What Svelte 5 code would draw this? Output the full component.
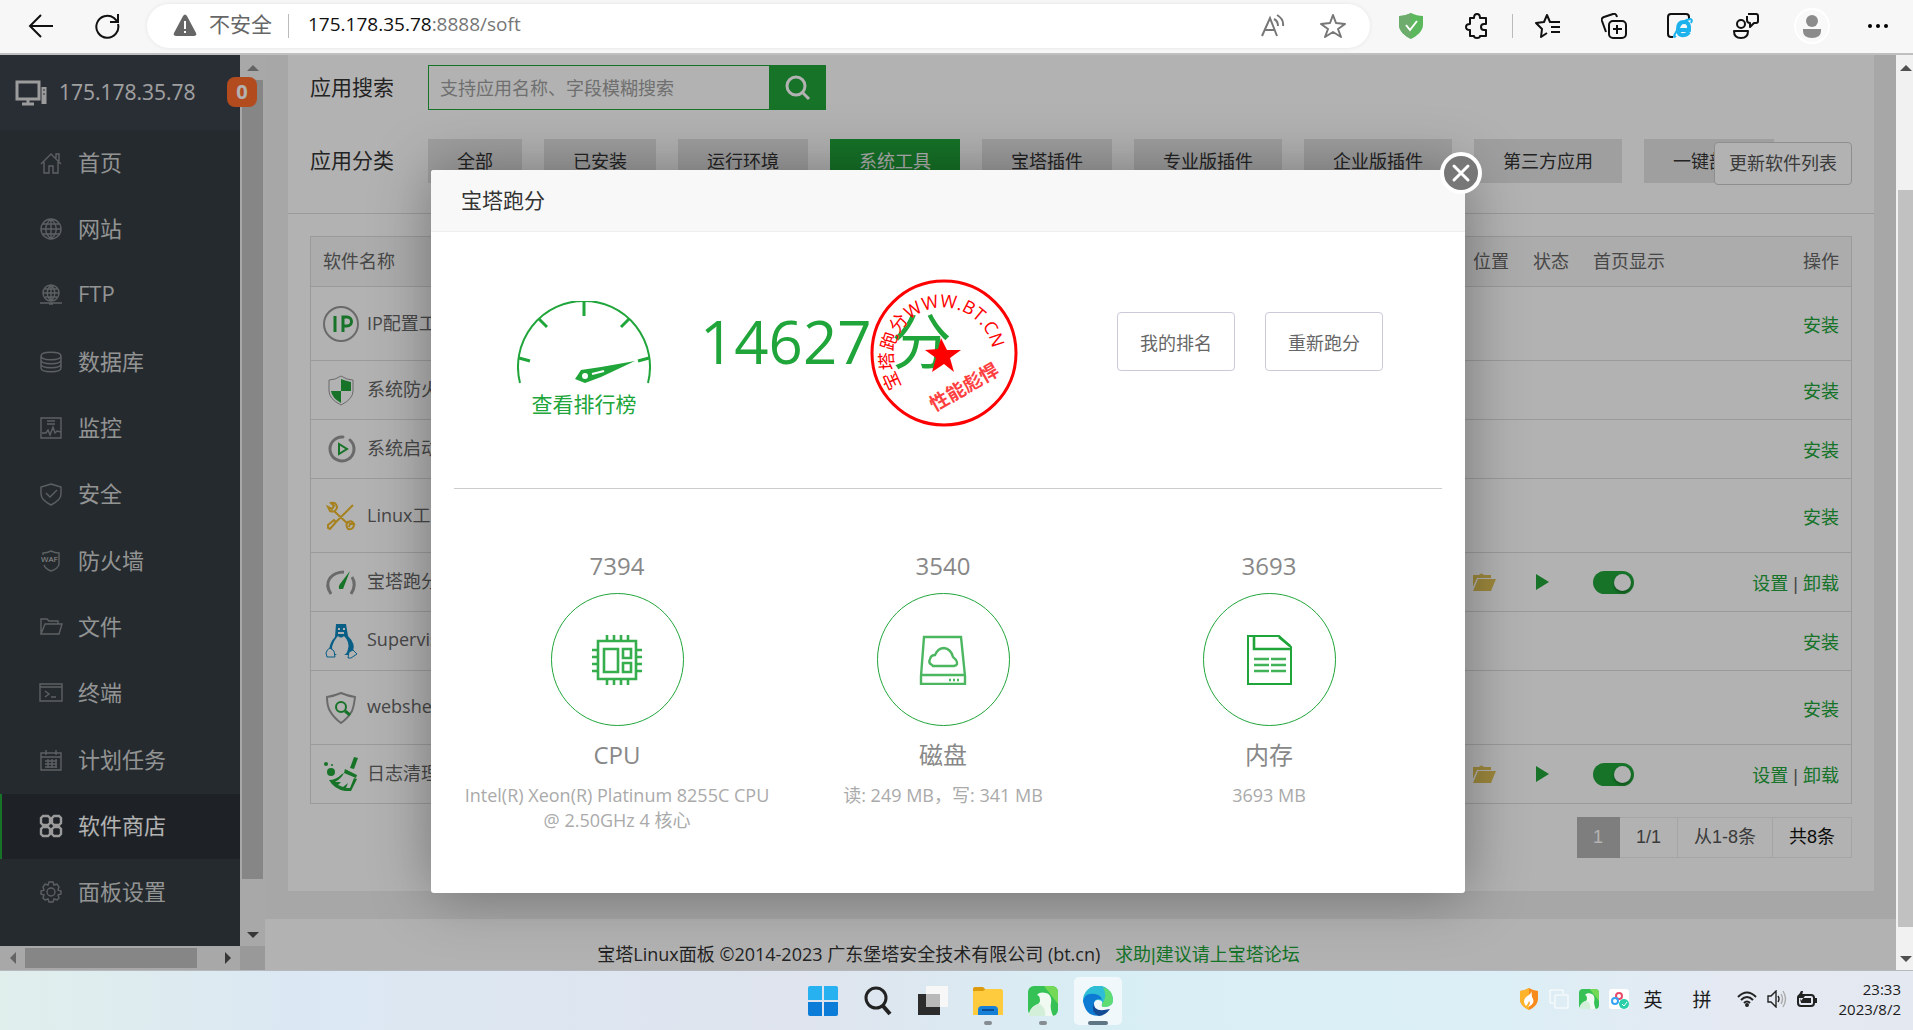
<script lang="ts">
	let keyword = $state('');
	let currentType = $state('系统工具');
	let currentMenu = $state('软件商店');
	let showScore = $state(true);

	const menus = [
		{ name: '首页', d: 'M1 12 11 2l10 10M4 10v11h5v-7h4v7h5V10M16 6V2h3v7' },
		{ name: '网站', d: 'M11 1a10 10 0 1 0 0 20 10 10 0 0 0 0-20zM11 1v20M1 11h20M3 6h16M3 16h16M11 1c-7 6-7 14 0 20M11 1c7 6 7 14 0 20' },
		{ name: 'FTP', d: 'M11 1a8 8 0 1 0 0 16 8 8 0 0 0 0-16zM11 1v16M3 9h16M5 5h12M5 13h12M11 1c-5 5-5 11 0 16M11 1c5 5 5 11 0 16M0 19h22M9 20h4' },
		{ name: '数据库', d: 'M1 5c0-5 20-5 20 0s-20 5-20 0v12c0 5 20 5 20 0V5M1 9c0 5 20 5 20 0M1 13c0 5 20 5 20 0' },
		{ name: '监控', d: 'M1 1h20v20H1zM7 4h8M7 7h8M2 16h4l2-3 2 5 3-8 2 6 2-2 4 1' },
		{ name: '安全', d: 'M11 1 21 4v7c0 5-4 8-10 11C5 19 1 16 1 11V4zM6 10l4 4 7-7' },
		{ name: '防火墙', d: 'M3 5V3c3 0 6-1 8-2 2 1 5 2 8 2v11c0 3-4 6-8 7-3-1-6-3-7-6' },
		{ name: '文件', d: 'M1 18V3h6l2 2h9v3M1 18 5 8h17l-3 10z' },
		{ name: '终端', d: 'M0 2h22v17H0zM0 5h22M5 9l4 3-4 3M11 15h5' },
		{ name: '计划任务', d: 'M1 4h20v17H1zM1 8h20M6 1v5M16 1v5M5 12h12M5 15h12M5 18h12M8 10v9M12 10v9M16 10v9' },
		{ name: '软件商店', d: 'M3 1h5l2 2v5l-2 2H3L1 8V3zM14 1h5l2 2v5l-2 2h-5l-2-2V3zM3 12h5l2 2v5l-2 2H3l-2-2v-5zM14 12h5l2 2v5l-2 2h-5l-2-2v-5z' },
		{ name: '面板设置', d: 'M9 1h4l1 3 3-1 2 3-1 3 3 1v3l-3 1 1 3-2 2-3-1-1 3H9l-1-3-3 1-2-2 1-3-3-1v-3l3-1-1-3 2-3 3 1zM11 7a4 4 0 1 0 0 8 4 4 0 0 0 0-8z' }
	];

	const types = ['全部', '已安装', '运行环境', '系统工具', '宝塔插件', '专业版插件', '企业版插件', '第三方应用', '一键部署'];

	let softs = $state([
		{ name: 'IP配置工具', icon: 'ip', tall: true, installed: false, index: false },
		{ name: '系统防火墙', icon: 'firewall', tall: false, installed: false, index: false },
		{ name: '系统启动项', icon: 'boot', tall: false, installed: false, index: false },
		{ name: 'Linux工具箱', icon: 'tools', tall: true, installed: false, index: false },
		{ name: '宝塔跑分', icon: 'score', tall: false, installed: true, index: true },
		{ name: 'Supervisor', icon: 'linux', tall: false, installed: false, index: false },
		{ name: 'webshell', icon: 'webshell', tall: true, installed: false, index: false },
		{ name: '日志清理', icon: 'broom', tall: false, installed: true, index: true }
	]);

	const scores = [
		{ key: 'cpu', value: 7394, label: 'CPU', desc: 'Intel(R) Xeon(R) Platinum 8255C CPU @ 2.50GHz 4 核心' },
		{ key: 'disk', value: 3540, label: '磁盘', desc: '读: 249 MB，写: 341 MB' },
		{ key: 'mem', value: 3693, label: '内存', desc: '3693 MB' }
	];
</script>

{#snippet bird(size: number)}
	<svg width={size} height={size} viewBox="0 0 30 30">
		<rect width="30" height="30" rx="6" fill="#35c156" />
		<path d="M16 0h8a6 6 0 0 1 6 6v12z" fill="#74d957" />
		<path d="M9 9c2-3 6-3 9-2 4 1 6 5 5 10-1 4 0 8 2 13H1c0-6 4-10 9-12 3-2 2-5 1-8z" fill="#f1faf2" />
		<path d="M1 30c0-7 5-12 11-12 4 3 6 7 5 12z" fill="#d3efd9" />
	</svg>
{/snippet}

<div class="desktop">
	<header class="browser">
		<button class="tool" aria-label="后退">
			<svg width="26" height="26" viewBox="0 0 26 26" fill="none" stroke="#111" stroke-width="2"><path d="M25 13H2M13 2 2 13l11 11" /></svg>
		</button>
		<button class="tool" aria-label="刷新">
			<svg width="26" height="26" viewBox="0 0 26 26" fill="none" stroke="#111" stroke-width="2"><path d="M24 11a11 11 0 1 1-4-6l3 3M24 1v8h-8" /></svg>
		</button>
		<div class="address">
			<svg width="24" height="23" viewBox="0 0 24 23"><path d="M10 2q2-3 4 0l9 17q1 3-2 3H3q-3 0-2-3z" fill="#666" /><path d="M12 7v8M12 17v2" stroke="#fff" stroke-width="2" /></svg>
			<span class="unsafe">不安全</span>
			<span class="divider"></span>
			<span class="url">175.178.35.78<span>:8888/soft</span></span>
			<button class="inner-tool" aria-label="朗读">
				<svg width="24" height="24" viewBox="0 0 24 24" fill="none" stroke="#777" stroke-width="2"><path d="M1 22 9 4l7 18M4 16h10M13 5q4 2 4 7M16 1q7 4 6 11" /></svg>
			</button>
			<button class="inner-tool" aria-label="收藏">
				<svg width="26" height="26" viewBox="0 0 26 26" fill="none" stroke="#777" stroke-width="2" stroke-linejoin="round"><path d="m13 2 3 8 9 1-7 5 3 8-8-5-8 5 3-8-7-5 9-1z" /></svg>
			</button>
		</div>
		<button class="tool" aria-label="安全防护">
			<svg width="24" height="26" viewBox="0 0 24 26"><path d="M12 0c4 2 8 3 12 3v9c0 6-6 11-12 14C6 23 0 18 0 12V3c4 0 8-1 12-3z" fill="#5cb85c" /><path d="M12 0C8 2 4 3 0 3v9c0 6 6 11 12 14z" fill="#6dac6d" /><path d="m7 12 4 5 7-9" fill="none" stroke="#fff" stroke-width="2" /></svg>
		</button>
		<button class="tool" aria-label="扩展">
			<svg width="24" height="26" viewBox="0 0 24 26" fill="none" stroke="#111" stroke-width="2" stroke-linejoin="round"><path d="M5 5h4q0-4 3-4t3 4h6v6h-2q-3 0-3 3t3 3h2v6h-6q0 2-3 2t-3-2H5v-6q-4 0-4-3t4-3z" /></svg>
		</button>
		<span class="divider"></span>
		<button class="tool" aria-label="收藏夹">
			<svg width="26" height="26" viewBox="0 0 26 26" fill="none" stroke="#111" stroke-width="2" stroke-linejoin="round"><path d="M17 9h-2l-3-7-3 7-8 1 6 6-1 8 6-4M17 9h8M16 14h9M16 19h9" /></svg>
		</button>
		<button class="tool" aria-label="集锦">
			<svg width="26" height="26" viewBox="0 0 26 26" fill="none" stroke="#111" stroke-width="2"><path d="M5 19 1 8q-1-3 2-4l9-3q3-1 4 3" /><rect x="8" y="8" width="17" height="17" rx="4" /><path d="M16 12v9M12 16h9" /></svg>
		</button>
		<button class="tool" aria-label="IE 模式">
			<svg width="26" height="26" viewBox="0 0 26 26" fill="none"><path d="M6 24H4q-3 0-3-3V4q0-3 3-3h15q3 0 3 3v2" stroke="#111" stroke-width="2" /><path d="M11 17h11q1-8-5-8t-6 7 6 6q3 0 5-3" stroke="#1eb2ec" stroke-width="4" /><path d="M9 23q-4 3 0-4Q15 7 23 6q3 0 1 4" stroke="#1eb2ec" stroke-width="2" /></svg>
		</button>
		<button class="tool" aria-label="分享">
			<svg width="26" height="26" viewBox="0 0 26 26" fill="none" stroke="#111" stroke-width="2" stroke-linejoin="round"><circle cx="8" cy="11" r="4" /><path d="M1 18h14q0 7-7 7t-7-7zM15 1h8q2 0 2 2v5q0 2-2 2h-2l-4 4v-4q-3 0-3-3V3" /></svg>
		</button>
		<button class="tool" aria-label="个人">
			<svg width="36" height="36" viewBox="0 0 36 36"><circle cx="18" cy="18" r="17" fill="#f9f9f9" stroke="#fff" stroke-width="2" /><circle cx="18" cy="13" r="6" fill="#8b8b8b" /><path d="M9 21h18v2q0 7-9 7t-9-7z" fill="#8b8b8b" /></svg>
		</button>
		<button class="tool" aria-label="更多">
			<svg width="20" height="4" viewBox="0 0 20 4"><circle cx="2" cy="2" r="2" /><circle cx="10" cy="2" r="2" /><circle cx="18" cy="2" r="2" /></svg>
		</button>
	</header>

	<div class="window">
		<div class="page">
			<aside class="sidebar">
				<div class="sidebar-body">
					<div class="server">
						<svg width="32" height="26" viewBox="0 0 32 26" fill="none" stroke="#e0e0e0" stroke-width="3"><path d="M2 2h22v17H2z" /><path d="M13 19v4M7 24h12" /><path d="M29 7v17" stroke-width="5" /><path d="M29 9v2M29 13v2" stroke="#3c424d" stroke-width="1" /></svg>
						<span>175.178.35.78</span>
						<b class="badge">0</b>
					</div>
					<nav>
						{#each menus as menu}
							<a href="#{menu.name}" class:active={menu.name === currentMenu} onclick={() => (currentMenu = menu.name)}>
								<svg width="24" height="24" viewBox="-1 -1 24 24" fill="none" stroke="currentColor" stroke-width={menu.name === '软件商店' ? 2.4 : 1.4}>
									<path d={menu.d} />
									{#if menu.name === '防火墙'}
										<text x="1" y="12" font-size="8" fill="#d2d4d5" stroke="none">WAF</text>
									{/if}
								</svg>
								<span>{menu.name}</span>
							</a>
						{/each}
					</nav>
				</div>
				<div class="vbar">
					<i class="arrow up faint"></i>
					<div class="vthumb"></div>
					<i class="arrow down"></i>
				</div>
				<div class="hbar">
					<i class="arrow left faint"></i>
					<div class="hthumb"></div>
					<i class="arrow right"></i>
				</div>
				<div class="corner"></div>
			</aside>

			<main>
				<section class="panel">
					<div class="filters">
						<div class="filter-row">
							<label for="keyword">应用搜索</label>
							<div class="search">
								<input id="keyword" type="text" placeholder="支持应用名称、字段模糊搜索" bind:value={keyword} />
								<button aria-label="搜索">
									<svg width="26" height="26" viewBox="0 0 26 26" fill="none" stroke="#fff" stroke-width="3"><circle cx="11" cy="11" r="9" /><path d="m17 17 7 7" /></svg>
								</button>
							</div>
						</div>
						<div class="filter-row types">
							<span class="row-label">应用分类</span>
							<div class="type-list">
								{#each types as type}
									<button class:on={type === currentType} onclick={() => (currentType = type)}>{type}</button>
								{/each}
							</div>
							<button class="update">更新软件列表</button>
						</div>
					</div>

					<div class="list">
						<table>
							<thead>
								<tr>
									<th>软件名称</th>
									<th class="narrow">位置</th>
									<th class="narrow">状态</th>
									<th class="index">首页显示</th>
									<th class="ops">操作</th>
								</tr>
							</thead>
							<tbody>
								{#each softs as soft}
									<tr class:tall={soft.tall}>
										<td>
											<div class="soft">
												<svg width="36" height="36" viewBox="0 0 36 36" fill="none">
													{#if soft.icon === 'ip'}
														<circle cx="18" cy="18" r="17" stroke="#999" stroke-width="2" />
														<path d="M12 10v16M20 26V11h4a4 4 0 0 1 0 9h-4" stroke="#20a53a" stroke-width="3" />
													{:else if soft.icon === 'firewall'}
														<path d="M18 4q6 4 12 4v11q0 8-12 14Q6 27 6 19V8q6 0 12-4z" fill="#fff" stroke="#999" />
														<path d="M18 7q5 2 10 3v9H18zM18 19v12Q9 26 8 19z" fill="#20a53a" />
													{:else if soft.icon === 'boot'}
														<path d="M20 6a12 12 0 1 0 7 3" stroke="#999" stroke-width="3" stroke-linecap="round" />
														<path d="M16 13v10l8-5z" stroke="#20a53a" stroke-width="2" />
													{:else if soft.icon === 'tools'}
														<path d="M11 13 25 26M30 7 13 24M8 5q5-1 6 4-1 6-7 4L5 9l4 2 2-3zM31 26q0 6-6 5-3-4 0-7 4-2 6 2l-4 0-1 3M13 24l-6 7-2-1 0-3 6-5z" stroke="#efb92b" stroke-width="2" />
													{:else if soft.icon === 'score'}
														<path d="M8 30Q2 21 7 14q5-6 14-6M29 13q5 8-1 17" stroke="#999" stroke-width="3" />
														<path d="M27 7 20 25l-4 0q-1-3 1-5z" fill="#20a53a" />
													{:else if soft.icon === 'linux'}
														<path d="M13 1h10l2 12q8 8 5 15l-4 4H11l-5-5q1-8 6-13z" fill="#0d87bf" />
														<path d="M15 13q3 3 6 0 6 6 4 13-1 5-4 6h-7q-5-3-5-8 2-7 6-11z" fill="#fff" />
														<path d="M7 25q-3 1-4 5l1 4h8l-1-6zM30 27l4 4-6 4h-3l1-6z" fill="#fff" stroke="#0d87bf" />
														<path d="M15 6h2M20 6h2M15 10h6" stroke="#fff" stroke-width="2" />
													{:else if soft.icon === 'webshell'}
														<path d="M18 3q7 3 14 4-1 9-3 14-4 7-11 12Q11 28 7 21 4 16 4 7q7-1 14-4z" stroke="#999" stroke-width="2" />
														<circle cx="18" cy="17" r="5" stroke="#20a53a" stroke-width="2" />
														<path d="m22 21 5 4" stroke="#20a53a" stroke-width="3" />
													{:else}
														<path d="m31 1 4 1-4 11-4-1zM22 13l12 6-1 3-12-5zM19 18q-6 6-13 6 5 9 16 11h6l6-12-3-1-4 10-4 0 2-5-5 4-5-2 3-3-6 0q6-3 9-9z" fill="#20a53a" />
														<circle cx="8" cy="16" r="4" fill="#20a53a" /><circle cx="3" cy="8" r="2" fill="#20a53a" /><circle cx="9" cy="9" r="1" fill="#20a53a" />
													{/if}
												</svg>
												<span>{soft.name}</span>
											</div>
										</td>
										<td>
											{#if soft.installed}
												<svg width="24" height="18" viewBox="0 0 24 18" fill="#e0c257"><path d="M0 14V2h6q2-3 5 0h7v3H4zM5 6h18l-5 12H0z" /></svg>
											{/if}
										</td>
										<td>
											{#if soft.installed}
												<svg class="play" width="13" height="16" viewBox="0 0 13 16" fill="#20a53a"><path d="M0 0v16l13-8z" /></svg>
											{/if}
										</td>
										<td>
											{#if soft.installed}
												<input class="switch" type="checkbox" aria-label="首页显示" bind:checked={soft.index} />
											{/if}
										</td>
										<td class="ops">
											{#if soft.installed}
												<a href="#set">设置</a> | <a href="#remove">卸载</a>
											{:else}
												<a href="#install">安装</a>
											{/if}
										</td>
									</tr>
								{/each}
							</tbody>
						</table>
						<div class="pager">
							<span class="current">1</span>
							<span>1/1</span>
							<span>从1-8条</span>
							<span class="total">共8条</span>
						</div>
					</div>
				</section>
				<footer>
					宝塔Linux面板 ©2014-2023 广东堡塔安全技术有限公司 (bt.cn)
					<a href="#bbs">求助|建议请上宝塔论坛</a>
				</footer>
			</main>

			{#if showScore}
				<div class="mask">
					<div class="modal" role="dialog" aria-label="宝塔跑分">
						<div class="modal-title">宝塔跑分</div>
						<button class="close" aria-label="关闭" onclick={() => (showScore = false)}>
							<svg width="43" height="43" viewBox="0 0 43 43"><circle cx="21" cy="21" r="19" fill="#777" stroke="#fff" stroke-width="4" /><path d="m14 14 14 14M28 14 14 28" stroke="#fff" stroke-width="3" stroke-linecap="round" /></svg>
						</button>
						<div class="modal-body">
							<div class="summary">
								<a class="gauge" href="#rank">
									<svg width="134" height="83" viewBox="0 0 134 83" fill="none" stroke="#20a53a" stroke-width="2">
										<path d="M3 82a66 66 0 1 1 128 0" />
										<path d="M67 1v14M22 18l8 8M112 18l-8 8M2 57l11 3M132 57l-11 3" stroke-width="3" />
										<path d="M118 60 84 76l-16 6-10-4 6-9 20-3z" fill="#20a53a" stroke="none" />
										<circle cx="68" cy="75" r="3" fill="#fff" stroke="none" />
										<path d="m75 73 12-3" stroke="#fff" />
									</svg>
									<span>查看排行榜</span>
								</a>
								<div class="total-score">
									<span>14627</span>
									<span>分</span>
									<svg class="stamp" width="148" height="148" viewBox="0 0 148 148">
										<circle cx="74" cy="74" r="72" fill="none" stroke="#f00" stroke-width="3" />
										<path id="stamp-arc" d="M32 107A50 50 0 1 1 123 82" fill="none" />
										<text font-size="18" fill="#f00"><textPath href="#stamp-arc">宝塔跑分WWW.BT.CN</textPath></text>
										<path d="m71 59 6 12 14 0-11 8 4 14-10-8-12 8 4-14-11-8 13-1z" fill="#f00" />
										<text x="94" y="115" font-size="19" font-weight="700" fill="#f00" text-anchor="middle" transform="rotate(-30 94 108)" opacity=".75">性能彪悍</text>
									</svg>
								</div>
								<div class="actions">
									<button>我的排名</button>
									<button>重新跑分</button>
								</div>
							</div>
							<div class="scores">
								{#each scores as score}
									<div class="score">
										<div class="value">{score.value}</div>
										<div class="circle">
											<svg width="50" height="50" viewBox="0 0 50 50" fill="none" stroke="#20a53a" stroke-width="2">
												{#if score.key === 'cpu'}
													<path d="M6 6h38v38H6zM12 14h14v23H12zM31 14h8v9h-8zM31 28h8v9h-8z" stroke-width="2.6" opacity=".9" />
													<path d="M15 0v5M22 0v5M29 0v5M36 0v5M15 45v5M22 45v5M29 45v5M36 45v5M0 15h5M0 22h5M0 29h5M0 36h5M45 15h5M45 22h5M45 29h5M45 36h5" stroke-width="2.6" opacity=".9" />
												{:else if score.key === 'disk'}
													<g opacity=".8" stroke-width="2.4">
														<path d="M6 2h37l4 39v8H3v-8zM3 40h44" />
														<path d="M14 30q-4-2-2-6 1-4 5-4 3-7 9-7 7 1 9 9l3 3q3 5-2 6H15z" />
														<path d="M31 45h2M35 45h2M39 45h2" />
													</g>
												{:else}
													<path d="M4 1h31l12 11v37H4z" />
													<path d="M10 1v13h37M35 2l11 9" stroke-width="2.6" />
													<path d="M10 24h15M27 24h15M10 30h15M27 30h15M10 36h15M27 36h15" stroke-width="2.6" opacity=".85" />
												{/if}
											</svg>
										</div>
										<div class="label">{score.label}</div>
										<div class="desc">{score.desc}</div>
									</div>
								{/each}
							</div>
						</div>
					</div>
				</div>
			{/if}
		</div>
		<div class="page-scroll">
			<i class="arrow up"></i>
			<div class="page-thumb"></div>
			<i class="arrow down"></i>
		</div>
	</div>

	<div class="taskbar">
		<div></div>
		<div class="apps">
			<button aria-label="开始">
				<svg width="30" height="30" viewBox="0 0 30 30"><path d="M0 2q0-2 2-2h12v14H0zM16 0h12q2 0 2 2v12H16z" fill="#27b1f0" /><path d="M0 16h14v14H2q-2 0-2-2zM16 16h14v12q0 2-2 2H16z" fill="#0b7dd8" /></svg>
			</button>
			<button aria-label="搜索">
				<svg width="28" height="30" viewBox="0 0 28 30" fill="none" stroke="#222" stroke-width="3"><circle cx="12" cy="12" r="10" /><path d="m19 20 7 8" stroke-width="4" /></svg>
			</button>
			<button aria-label="任务视图">
				<svg width="30" height="30" viewBox="0 0 30 30"><path d="M0 8h22v21H0z" fill="#2c2c2c" /><path d="M8 0h22v21H8z" fill="#f7f7f7" /><path d="M8 8h14v13H8z" fill="#b9b9b9" /></svg>
			</button>
			<button class="running" aria-label="资源管理器">
				<svg width="30" height="30" viewBox="0 0 30 30"><path d="M0 3q0-2 2-2h8l3 3v4H0z" fill="#dc9a0c" /><path d="M0 5h10l3-2h15q2 0 2 2v24H0z" fill="#ffcb3e" /><path d="M5 29v-5q0-4 4-4h12q4 0 4 4v5z" fill="#1680d6" /><path d="M9 24h12" stroke="#0a4f96" stroke-width="2" /></svg>
			</button>
			<button class="running" aria-label="应用">{@render bird(30)}</button>
			<button class="running focus" aria-label="Edge">
				<svg width="30" height="30" viewBox="0 0 30 30"><path d="M0 15A15 15 0 0 1 30 14q0 7-9 7-3 0-2-3 1-4-4-4-6 0-5 8-8 0-10-7z" fill="#2ebdd6" /><path d="M20 1q10 3 10 13 0 7-9 7-3 0-2-3 6-8 1-17z" fill="#5fdc74" /><path d="M0 15Q2 6 12 8q6 1 7 6-6-3-8 3-1 9 9 12Q3 33 0 15z" fill="#0d7bd4" /><path d="M11 17q-1 10 16 6-4 6-11 7-9-4-5-13z" fill="#124b93" /></svg>
			</button>
		</div>
		<div class="tray">
			<svg width="20" height="22" viewBox="0 0 20 22"><path d="M10 0q5 3 9 3v8q0 7-9 11Q1 18 1 11V3q4 0 9-3z" fill="#f78b1d" /><path d="M10 0v22Q1 18 1 11V3q4 0 9-3z" fill="#fdb42b" /><path d="M13 3q-1 5 1 8 2 5-5 8 3-4 1-6-1 3-3 5-4-5 0-9 5-3 6-6z" fill="#fff" /></svg>
			<svg width="20" height="20" viewBox="0 0 20 20" fill="none" stroke="#fff" stroke-width="1"><path d="M5 14H1V1h13v4M6 6h13v13H6z" /></svg>
			{@render bird(20)}
			<svg width="20" height="20" viewBox="0 0 20 20" fill="none"><rect width="20" height="20" rx="3" fill="#fff" /><circle cx="10" cy="7" r="3" stroke="#e84b6a" stroke-width="2" /><circle cx="6" cy="12" r="3" stroke="#35a3f5" stroke-width="2" /><circle cx="15" cy="15" r="5" fill="#28cfa8" /><path d="m13 15 2 2 3-4" stroke="#fff" /></svg>
			<span class="ime">英</span>
			<span class="ime">拼</span>
			<svg width="20" height="16" viewBox="0 0 20 16" fill="none" stroke="#222" stroke-width="2"><path d="M1 6q9-9 18 0M4 9q6-6 12 0M7 12q3-3 6 0" /><circle cx="10" cy="14" r="1" /></svg>
			<svg width="20" height="18" viewBox="0 0 20 18" fill="none" stroke="#222" stroke-width="1.4"><path d="M1 6h3l5-5v16l-5-5H1zM11 6q2 3 0 6" /><path d="M14 4q3 5 0 10M16 1q5 8 0 16" stroke="#aaa" /></svg>
			<svg width="20" height="16" viewBox="0 0 20 16"><rect x="1" y="4" width="16" height="11" rx="3" fill="none" stroke="#222" stroke-width="2" /><path d="M4 7h10v5H4zM18 7h2v5h-2zM4 0 0 7h4l-1 4 5-6H5l1-5z" fill="#222" /></svg>
			<div class="clock">23:33<br />2023/8/2</div>
		</div>
	</div>
</div>

<style>
	:global(body) {
		margin: 0;
		font-family: 'Open Sans', 'Noto Sans CJK SC', sans-serif;
		font-size: 18px;
		color: #333;
	}

	.desktop {
		display: flex;
		flex-direction: column;
		height: 100vh;
		overflow: hidden;
	}

	button,
	input {
		font: inherit;
		box-sizing: border-box;
	}

	button {
		padding: 0;
		border: 0;
		background: none;
		cursor: pointer;
	}

	a {
		color: #20a53a;
		text-decoration: none;
	}

	svg {
		display: block;
		flex: none;
	}

	/* browser bar */
	.browser {
		display: flex;
		align-items: center;
		flex: none;
		height: 53px;
		padding: 0 2px 2px 8px;
		box-sizing: border-box;
		background: #f7f7f7;
	}

	.tool {
		width: 66px;
		height: 44px;
		display: flex;
		align-items: center;
		justify-content: center;
	}

	.address {
		flex: 1;
		display: flex;
		align-items: center;
		height: 44px;
		margin: 0 8px 0 7px;
		padding: 0 7px 0 26px;
		border-radius: 22px;
		background: #fff;
		box-shadow: 0 0 4px rgba(0, 0, 0, 0.08);
	}

	.unsafe {
		margin: 0 14px 0 12px;
		padding-bottom: 3px;
		font-size: 21px;
		line-height: 28px;
		color: #666;
	}

	.divider {
		width: 1px;
		height: 24px;
		margin: 0 2px;
		background: #bbb;
	}

	.url {
		flex: 1;
		margin-left: 17px;
		padding-bottom: 3px;
		font-size: 19px;
		color: #111;
	}

	.url span {
		color: #767676;
	}

	.inner-tool {
		width: 60px;
		display: flex;
		justify-content: center;
	}

	/* window */
	.window {
		flex: 1;
		min-height: 0;
		display: flex;
		border-top: 2px solid #bfbfbf;
		border-bottom: 1px solid #b5b9bd;
	}

	.page {
		position: relative;
		flex: 1;
		min-width: 0;
		display: flex;
		overflow: hidden;
		background: #f0f0f0;
	}

	.page-scroll {
		width: 15px;
		padding: 0 0 0 2px;
		background: #f1f1f1;
		display: flex;
		flex-direction: column;
		align-items: center;
	}

	.page-thumb {
		flex: 1;
		width: 100%;
		margin: 119px 0 29px;
		background: #c1c1c1;
	}

	.arrow {
		flex: none;
		width: 0;
		height: 0;
		border: 6px solid transparent;
	}

	.arrow.up {
		margin-top: 4px;
		border-bottom-color: #505050;
	}

	.arrow.down {
		margin-bottom: 2px;
		border-top-color: #505050;
	}

	.arrow.left {
		border-right-color: #505050;
	}

	.arrow.right {
		border-left-color: #505050;
	}

	.arrow.faint {
		opacity: 0.6;
	}

	/* sidebar */
	.sidebar {
		flex: none;
		display: grid;
		grid-template: 1fr 24px / 240px 25px;
	}

	.sidebar-body {
		display: flex;
		flex-direction: column;
		background: #363d42;
	}

	.server {
		position: relative;
		display: flex;
		align-items: center;
		gap: 12px;
		height: 75px;
		padding-left: 15px;
		background: #3c424d;
		color: #e6e6e6;
		font-size: 21px;
	}

	.server span {
		padding-bottom: 2px;
	}

	.badge {
		position: absolute;
		top: 22px;
		right: -17px;
		width: 30px;
		line-height: 30px;
		border-radius: 8px;
		background: #ff6c2c;
		color: #fff;
		font-size: 20px;
		text-align: center;
	}

	nav {
		flex: 1;
		display: flex;
		flex-direction: column;
		justify-content: space-between;
		padding-bottom: 21px;
	}

	nav a {
		display: flex;
		align-items: center;
		gap: 15px;
		height: 65px;
		padding-left: 37px;
		border-left: 2px solid transparent;
		color: #858a8e;
		font-size: 22px;
	}

	nav a span {
		padding-bottom: 4px;
		color: #d2d4d5;
	}

	nav a.active {
		border-left-color: #20a53a;
		background: #2c3138;
		color: #dedede;
	}

	nav a.active span {
		color: #fff;
	}

	.vbar {
		display: flex;
		flex-direction: column;
		align-items: center;
		background: #f1f1f1;
	}

	.vthumb {
		flex: 1;
		width: 21px;
		margin: 9px 0 53px;
		background: #c1c1c1;
	}

	.hbar {
		display: flex;
		align-items: center;
		padding: 0 3px 0 4px;
		background: #f1f1f1;
	}

	.hthumb {
		flex: 1;
		height: 20px;
		margin: 0 28px 0 9px;
		background: #c1c1c1;
	}

	.corner {
		background: #dcdcdc;
	}

	/* content */
	main {
		flex: 1;
		min-width: 0;
		display: flex;
		flex-direction: column;
	}

	.panel {
		flex: none;
		margin: 0 22px 28px 23px;
		background: #fff;
	}

	.filters {
		padding: 10px 22px 30px;
		border-bottom: 1px solid #ddd;
	}

	.filter-row {
		display: flex;
		align-items: center;
		height: 45px;
	}

	.filter-row label,
	.row-label {
		flex: none;
		width: 118px;
		padding-bottom: 4px;
		font-size: 21px;
	}

	.search {
		display: flex;
		width: 398px;
		height: 45px;
	}

	.search input {
		flex: 1;
		min-width: 0;
		padding: 0 11px;
		border: 1px solid #20a53a;
		outline: none;
	}

	.search input::placeholder {
		color: #a0a0a0;
	}

	.search button {
		width: 56px;
		display: flex;
		align-items: center;
		justify-content: center;
		background: #20a53a;
	}

	.types {
		position: relative;
		margin-top: 28px;
	}

	.type-list {
		display: flex;
		gap: 22px;
	}

	.type-list button {
		flex: none;
		height: 44px;
		padding: 0 29px 2px;
		background: #e4e4e4;
		color: #333;
	}

	.type-list button.on {
		background: #20a53a;
		color: #fff;
	}

	.update {
		position: absolute;
		right: 0;
		top: 4px;
		height: 43px;
		padding: 0 14px 3px;
		border: 1px solid #ccc;
		border-radius: 4px;
		background: #fff;
		color: #555;
	}

	.list {
		padding: 22px 22px 33px;
	}

	table {
		width: 100%;
		border: 1px solid #ddd;
		border-collapse: collapse;
		color: #666;
	}

	th {
		height: 46px;
		padding: 0 12px 3px;
		background: #f6f6f6;
		font-weight: 400;
		text-align: left;
		white-space: nowrap;
	}

	td {
		height: 58px;
		padding: 0 12px;
		border-top: 1px solid #ddd;
	}

	.tall td {
		height: 73px;
	}

	.narrow {
		width: 35px;
	}

	.index {
		width: 96px;
	}

	.ops {
		width: 126px;
		font-family: 'Liberation Sans', 'Noto Sans CJK SC', sans-serif;
		text-align: right;
	}

	.soft {
		display: flex;
		align-items: center;
		gap: 8px;
	}

	.soft span {
		padding-bottom: 4px;
	}

	.play {
		margin-left: 3px;
	}

	.switch {
		position: relative;
		display: block;
		appearance: none;
		width: 41px;
		height: 23px;
		margin: 0;
		border-radius: 12px;
		background: #ccc;
	}

	.switch::after {
		content: '';
		position: absolute;
		top: 3px;
		left: 3px;
		width: 17px;
		height: 17px;
		border-radius: 50%;
		background: #fff;
		box-shadow: 0 2px 3px rgba(0, 0, 0, 0.3);
	}

	.switch:checked {
		background: #20a53a;
	}

	.switch:checked::after {
		left: 21px;
	}

	.pager {
		display: flex;
		justify-content: flex-end;
		margin-top: 13px;
		font-family: 'Liberation Sans', 'Noto Sans CJK SC', sans-serif;
	}

	.pager span {
		padding: 0 16px;
		border: 1px solid #ececec;
		border-left: 0;
		line-height: 39px;
		color: #555;
	}

	.pager .current {
		border-color: #b5b5b5;
		background: #b5b5b5;
		color: #fff;
	}

	.pager .total {
		color: #111;
	}

	footer {
		flex: 1;
		padding: 20px 264px 0 0;
		background: #fff;
		line-height: 30px;
		font-size: 18px;
		text-align: center;
		white-space: nowrap;
	}

	footer a {
		margin-left: 10px;
		font-family: 'Liberation Sans', 'Noto Sans CJK SC', sans-serif;
	}

	/* benchmark dialog */
	.mask {
		position: absolute;
		inset: 0;
		display: flex;
		align-items: flex-start;
		justify-content: center;
		padding-top: 115px;
		background: rgba(0, 0, 0, 0.3);
	}

	.modal {
		position: relative;
		width: 1034px;
		border-radius: 3px;
		background: #fff;
		box-shadow: 1px 1px 60px rgba(0, 0, 0, 0.35);
	}

	.modal-title {
		padding: 0 30px;
		border-bottom: 1px solid #eee;
		border-radius: 3px 3px 0 0;
		background: #f8f8f8;
		font-size: 21px;
		line-height: 61px;
	}

	.close {
		position: absolute;
		top: -18px;
		right: -18px;
	}

	.modal-body {
		padding: 0 23px 60px;
	}

	.summary {
		display: flex;
		align-items: flex-start;
		padding: 69px 59px 68px 63px;
		border-bottom: 1px solid #ccc;
	}

	.gauge span {
		display: block;
		margin-top: 4px;
		font-size: 21px;
		line-height: 32px;
		text-align: center;
	}

	.total-score {
		position: relative;
		flex: 1;
		display: flex;
		gap: 20px;
		margin: 0 0 1px 49px;
		color: #20a53a;
		font-size: 60px;
		line-height: 80px;
	}

	.stamp {
		position: absolute;
		top: -22px;
		left: 170px;
	}

	.actions {
		display: flex;
		gap: 30px;
		margin-top: 11px;
	}

	.actions button {
		width: 118px;
		height: 59px;
		border: 1px solid #cbcad8;
		border-radius: 4px;
		color: #666;
	}

	.scores {
		display: grid;
		grid-template-columns: repeat(3, 1fr);
		margin-right: 10px;
		padding-top: 60px;
		text-align: center;
	}

	.value,
	.label {
		color: #888;
		font-size: 24px;
		line-height: 34px;
	}

	.circle {
		display: flex;
		align-items: center;
		justify-content: center;
		width: 131px;
		height: 131px;
		margin: 10px auto 12px;
		border: 1px solid #20a53a;
		border-radius: 50%;
	}

	.desc {
		margin-top: 11px;
		padding: 0 4px;
		color: #aaa;
		font-size: 18px;
		line-height: 25px;
	}

	/* taskbar */
	.taskbar {
		flex: none;
		display: grid;
		grid-template-columns: 1fr auto 1fr;
		align-items: center;
		height: 59px;
		padding-left: 8px;
		background: linear-gradient(90deg, #e0efec, #dbe8f3 15%, #dfe4ee 42%, #d8eef5 58%, #dceff6 78%, #e4e9f2 90%, #e4e8f1);
	}

	.apps {
		display: flex;
		gap: 7px;
	}

	.apps button {
		position: relative;
		display: flex;
		align-items: center;
		justify-content: center;
		width: 48px;
		height: 48px;
		border-radius: 5px;
	}

	.apps .focus {
		background: #f1f8fb;
	}

	.apps .running::after {
		content: '';
		position: absolute;
		bottom: 0;
		width: 8px;
		height: 4px;
		border-radius: 2px;
		background: #868d92;
	}

	.apps .focus::after {
		width: 20px;
		background: #5f7684;
	}

	.tray {
		display: flex;
		align-items: center;
		justify-content: flex-end;
		gap: 10px;
		padding: 0 12px 3px 0;
		color: #1b1b1b;
	}

	.ime {
		margin: 0 15px 0 5px;
		font-size: 19px;
	}

	.clock {
		margin-left: 12px;
		font-size: 15px;
		line-height: 20px;
		text-align: right;
	}
</style>
